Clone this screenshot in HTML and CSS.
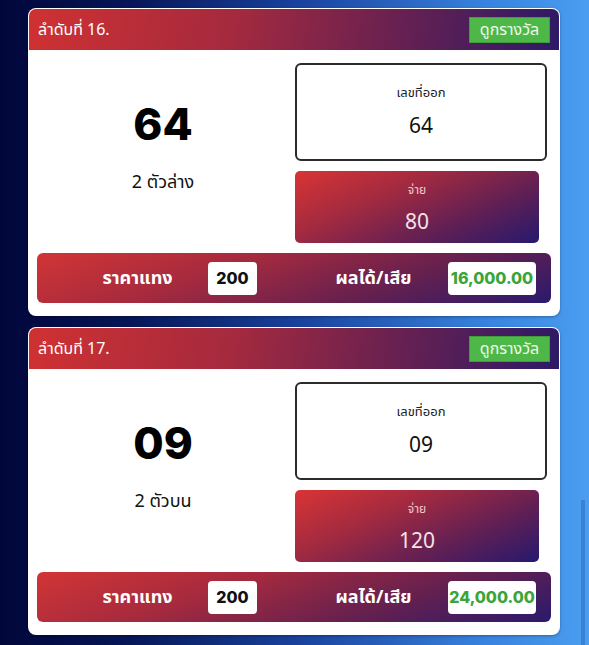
FILE: index.html
```html
<!DOCTYPE html>
<html lang="th">
<head>
    <meta charset="UTF-8">
    <meta name="viewport" content="width=device-width, initial-scale=1.0">
    <title>ผลการแทง</title>
    <link rel="stylesheet" href="styles.css">
</head>
<body>
    <div class="list">
        <div class="card">
            <div class="card-head">
                <span class="order">ลำดับที่ 16.</span>
                <button class="btn-prize">ดูกรางวัล</button>
            </div>
            <div class="card-body">
                <div class="pick">
                    <div class="pick-num">64</div>
                    <div class="pick-type">2 ตัวล่าง</div>
                </div>
                <div class="side">
                    <div class="result">
                        <div class="small">เลขที่ออก</div>
                        <div class="value">64</div>
                    </div>
                    <div class="pay">
                        <div class="small">จ่าย</div>
                        <div class="value">80</div>
                    </div>
                </div>
            </div>
            <div class="bar">
                <div class="bar-label">ราคาแทง</div>
                <div class="chip">200</div>
                <div class="bar-label wide">ผลได้/เสีย</div>
                <div class="chip win">16,000.00</div>
            </div>
        </div>

        <div class="card">
            <div class="card-head">
                <span class="order">ลำดับที่ 17.</span>
                <button class="btn-prize">ดูกรางวัล</button>
            </div>
            <div class="card-body">
                <div class="pick">
                    <div class="pick-num">09</div>
                    <div class="pick-type">2 ตัวบน</div>
                </div>
                <div class="side">
                    <div class="result">
                        <div class="small">เลขที่ออก</div>
                        <div class="value">09</div>
                    </div>
                    <div class="pay">
                        <div class="small">จ่าย</div>
                        <div class="value">120</div>
                    </div>
                </div>
            </div>
            <div class="bar">
                <div class="bar-label">ราคาแทง</div>
                <div class="chip">200</div>
                <div class="bar-label wide">ผลได้/เสีย</div>
                <div class="chip win">24,000.00</div>
            </div>
        </div>
    </div>
    <div class="scroll-thumb"></div>
</body>
</html>
```

FILE: styles.css
```css
body {
    margin: 0;
    height: 645px;
    overflow: hidden;
    font-family: "Noto Sans Thai", "Noto Sans", "DejaVu Sans", sans-serif;
    background: linear-gradient(to right, #01063a 0%, #061657 22%, #1a44a0 52%, #3782de 82%, #4a9ef0 100%);
}
.list {
    display: flex;
    flex-direction: column;
    gap: 11px;
    padding: 8px 29px 0 28px;
}
.card {
    background: #fff;
    border-radius: 8px;
    padding: 1px;
    box-shadow: 0 1px 3px rgba(0, 0, 0, 0.3);
}
.card-head {
    display: flex;
    justify-content: space-between;
    align-items: center;
    height: 41px;
    padding: 0 9px 0 9px;
    border-radius: 7px 7px 0 0;
    background: linear-gradient(100deg, #cf3132 0%, #a52a3e 38%, #6a2150 68%, #2d1a66 100%);
}
.order {
    color: #fff;
    font-size: 16px;
}
.btn-prize {
    height: 26px;
    width: 81px;
    padding: 0;
    border: 1px solid #3f9e3a;
    background: #4db848;
    color: #eef9ea;
    font-family: inherit;
    font-size: 16px;
}
.card-body {
    display: flex;
    padding: 13px 12px 0 8px;
}
.pick {
    flex: 1;
    display: flex;
    flex-direction: column;
    align-items: center;
    justify-content: center;
    padding-bottom: 12px;
    padding-right: 6px;
}
.pick-num {
    font-family: "Inter", "Noto Sans", sans-serif;
    font-weight: 800;
    font-size: 44px;
    line-height: 50px;
    color: #000;
}
.pick-type {
    margin-top: 22px;
    font-size: 18px;
    line-height: 24px;
    color: #111;
}
.side {
    width: 252px;
    display: flex;
    flex-direction: column;
    gap: 10px;
}
.result {
    height: 94px;
    border: 2px solid #2b2b2b;
    border-radius: 6px;
    display: flex;
    flex-direction: column;
    align-items: center;
    justify-content: center;
    gap: 8px;
}
.result .small {
    font-size: 13px;
    color: #222;
}
.result .value {
    font-size: 21px;
    color: #111;
}
.pay {
    width: 244px;
    height: 72px;
    border-radius: 5px;
    display: flex;
    flex-direction: column;
    align-items: center;
    justify-content: center;
    gap: 8px;
    padding-top: 4px;
    box-sizing: border-box;
    background: linear-gradient(155deg, #d93434 0%, #a22a40 35%, #5e1f55 70%, #26196e 100%);
}
.pay .small {
    font-size: 12px;
    color: #f3c9d2;
}
.pay .value {
    font-size: 21px;
    color: #f6e2e8;
}
.bar {
    display: flex;
    align-items: center;
    height: 50px;
    margin: 10px 8px 12px 8px;
    padding-left: 30px;
    border-radius: 6px;
    background: linear-gradient(160deg, #d23535 0%, #a52a3e 35%, #65204f 68%, #2a1a6c 100%);
}
.bar-label {
    width: 141px;
    text-align: center;
    color: #fff;
    font-weight: 700;
    font-size: 18px;
}
.bar-label.wide {
    width: 149px;
    padding-left: 42px;
}
.chip {
    width: 49px;
    height: 33px;
    display: flex;
    align-items: center;
    justify-content: center;
    background: #fff;
    border-radius: 4px;
    font-family: "Inter", "Noto Sans", sans-serif;
    font-weight: 800;
    font-size: 16px;
    color: #111;
}
.chip.win {
    width: 88px;
    color: #3aa538;
}
.scroll-thumb {
    position: absolute;
    right: 4px;
    top: 500px;
    width: 4px;
    height: 145px;
    background: #3a82d8;
}
```
